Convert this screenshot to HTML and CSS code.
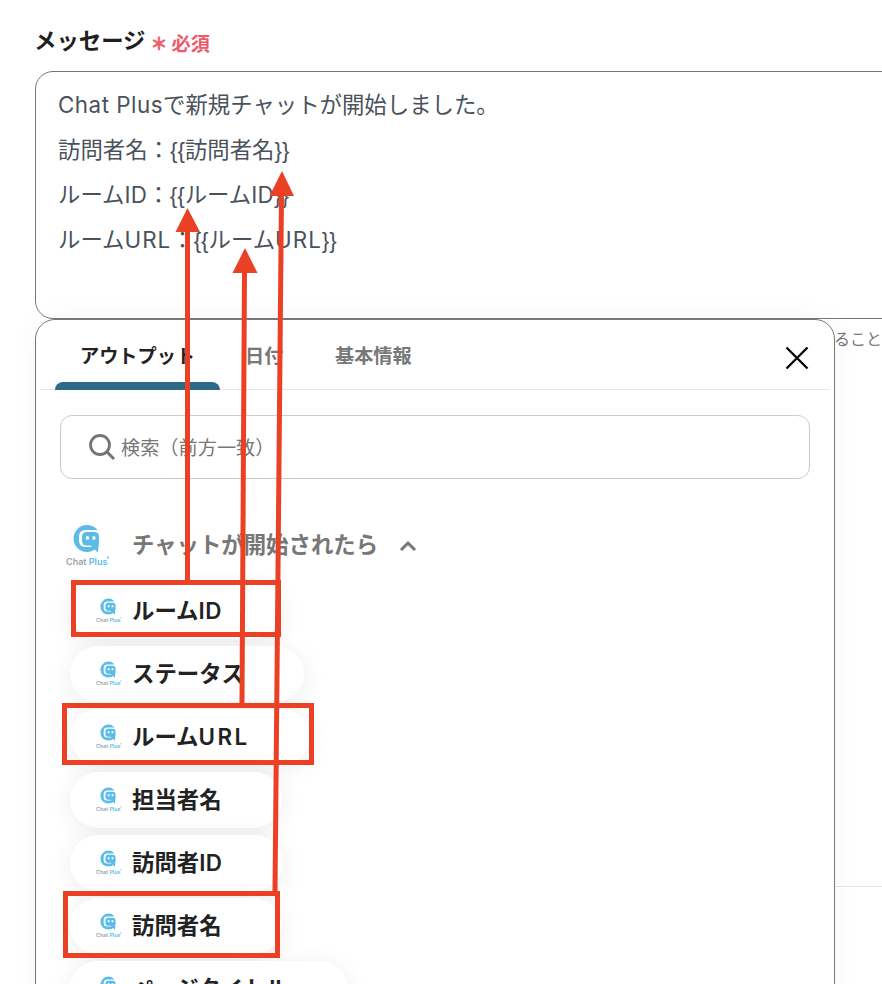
FILE: index.html
```html
<!DOCTYPE html>
<html lang="ja">
<head>
<meta charset="utf-8">
<title>メッセージ</title>
<link rel="stylesheet" href="styles.css">
</head>
<body>
<svg class="defs" width="0" height="0" aria-hidden="true">
  <symbol id="cp" viewBox="0 0 44 44">
    <circle cx="21" cy="14.500" r="13.500" fill="#5cbce6"/>
    <rect x="13" y="6" width="25" height="17" rx="6" fill="#fff"/>
    <rect x="16" y="8" width="17" height="13.500" rx="4.500" fill="#5cbce6"/>
    <path d="M24 21L33 17 32 28.500z" fill="#5cbce6"/>
    <rect x="19.800" y="12" width="3.200" height="3.800" rx="1.500" fill="#fff"/>
    <rect x="26.300" y="12" width="3.200" height="3.800" rx="1.500" fill="#fff"/>
    <text x="0" y="40.500" font-size="9" font-weight="600" font-family="Inter, sans-serif" fill="#9aa3a8">Chat <tspan fill="#5cbce6">Plus</tspan></text>
    <circle cx="42" cy="33.500" r="1" fill="#5cbce6"/>
  </symbol>
</svg>

<main class="page">
  <div class="label-row">
    <span class="label">メッセージ</span>
    <span class="star">＊</span>
    <span class="required">必須</span>
  </div>

  <div class="editor">
    <p><span class="sp-c">Chat Plus</span>で新規チャットが開始しました。</p>
    <p>訪問者名：<span class="br">{{</span>訪問者名<span class="br">}}</span></p>
    <p>ルーム<span class="sp-i">ID</span>：<span class="br">{{</span>ルーム<span class="sp-i">ID</span><span class="br">}}</span></p>
    <p>ルーム<span class="sp-u">URL</span>：<span class="br">{{</span>ルーム<span class="sp-u">URL</span><span class="br">}}</span></p>
  </div>

  <p class="behind">ること</p>
  <div class="behind-rule"></div>

  <section class="panel">
    <div class="tabs">
      <div class="tab tab-active">アウトプット</div>
      <div class="tab tab-date">日付</div>
      <div class="tab tab-basic">基本情報</div>
      <button class="close" aria-label="閉じる">
        <svg width="24" height="24" viewBox="0 0 24 24"><path d="M1.500 1.500l21 21M22.500 1.500l-21 21" stroke="#000" stroke-width="2.300" fill="none"/></svg>
      </button>
    </div>

    <div class="search">
      <svg width="28" height="28" viewBox="0 0 28 28"><circle cx="12" cy="12" r="9.500" fill="none" stroke="#757575" stroke-width="2.800"/><path d="M19 19l7 7" stroke="#757575" stroke-width="3" fill="none"/></svg>
      <span>検索（前方一致）</span>
    </div>

    <div class="group">
      <svg class="group-logo"><use href="#cp"/></svg>
      <span class="group-title">チャットが開始されたら</span>
      <svg class="chevron" width="18" height="12" viewBox="0 0 18 12"><path d="M2 10l7-7 7 7" fill="none" stroke="#777" stroke-width="3"/></svg>
    </div>

    <ul class="pills">
      <li class="pill"><svg class="pill-logo"><use href="#cp"/></svg><span>ルーム<span class="lat">ID</span></span></li>
      <li class="pill"><svg class="pill-logo"><use href="#cp"/></svg><span>ステータス</span></li>
      <li class="pill"><svg class="pill-logo"><use href="#cp"/></svg><span>ルーム<span class="lat-u">URL</span></span></li>
      <li class="pill"><svg class="pill-logo"><use href="#cp"/></svg><span>担当者名</span></li>
      <li class="pill"><svg class="pill-logo"><use href="#cp"/></svg><span>訪問者<span class="lat">ID</span></span></li>
      <li class="pill"><svg class="pill-logo"><use href="#cp"/></svg><span>訪問者名</span></li>
      <li class="pill"><svg class="pill-logo"><use href="#cp"/></svg><span>ページタイトル</span></li>
    </ul>
  </section>
</main>

<svg class="notes" width="882" height="984" viewBox="0 0 882 984" aria-hidden="true">
  <g fill="none" stroke="#ea4125" stroke-width="5">
    <rect x="73.500" y="582.500" width="205" height="52"/>
    <rect x="64.500" y="705.500" width="247" height="57"/>
    <rect x="65.500" y="893.500" width="212" height="62"/>
    <path d="M187.500 580V230"/>
    <path d="M242 704L244.500 270"/>
    <path d="M275 892L281.500 194"/>
  </g>
  <g fill="#ea4125">
    <path d="M187.500 208L200 232H175.500z"/>
    <path d="M245 248L257.500 273H232.500z"/>
    <path d="M282 171L294 196H269.500z"/>
  </g>
</svg>
</body>
</html>
```

FILE: styles.css
```css
* { box-sizing: border-box; }
html, body { margin: 0; padding: 0; }
body {
  width: 882px;
  height: 984px;
  overflow: hidden;
  background: #fff;
  font-family: Inter, "Noto Sans CJK JP", sans-serif;
  position: relative;
}
.defs { position: absolute; }
.page { padding: 26px 0 0 35px; width: 882px; height: 984px; overflow: hidden; position: relative; }

.label-row { display: flex; align-items: center; height: 30px; }
.label { font-size: 22.400px; font-weight: 700; color: #1f1f1f; line-height: 30px; margin-left: -1px; }
.star { color: #ef5a6b; font-size: 17px; font-weight: 700; line-height: 30px; margin: 5px 0 0 5px; -webkit-text-stroke: 0.6px #ef5a6b; }
.required { color: #ef5a6b; font-size: 19.200px; font-weight: 700; margin: 5px 0 0 4px; line-height: 30px; }

.editor {
  margin-top: 15px;
  width: 900px;
  height: 248px;
  border: 1px solid #777;
  border-radius: 18px;
  padding: 10px 22px;
  color: #4a525c;
  font-size: 22.400px;
}
.editor p { margin: 0; height: 45px; line-height: 45px; white-space: nowrap; }
.br { font-family: "Liberation Sans", sans-serif; }
.sp-c { letter-spacing: 0.500px; }
.sp-i { letter-spacing: 0.300px; }
.sp-u { letter-spacing: 1px; }

.behind { position: absolute; left: 834px; top: 328px; margin: 0; font-size: 16px; line-height: 22px; color: #777; white-space: nowrap; }
.behind-rule { position: absolute; left: 835px; right: 0; top: 886px; height: 1px; background: #e5e5e5; }

.panel {
  position: absolute;
  left: 35px;
  top: 319px;
  width: 800px;
  height: 700px;
  background: #fff;
  border: 1px solid #777;
  border-radius: 20px;
  box-shadow: 0 0 30px rgba(0,0,0,.04);
}

.tabs { position: relative; height: 70px; margin: 0 4px; border-bottom: 1px solid #e5e5e5; }
.tab { position: absolute; top: 22px; font-size: 19.200px; font-weight: 700; line-height: 28px; color: #777; white-space: nowrap; }
.tab-active { left: 40px; color: #222; }
.tab-active::after {
  content: "";
  position: absolute;
  left: -25px;
  top: 40px;
  width: 165px;
  height: 8px;
  background: #2c6a85;
  border-radius: 8px 8px 0 0;
}
.tab-date { left: 205px; }
.tab-basic { left: 295px; }
.close { position: absolute; right: 21px; top: 26px; width: 24px; height: 24px; padding: 0; border: 0; background: none; }
.close svg { display: block; }

.search {
  margin: 25px 24px 0;
  height: 64px;
  border: 1px solid #ccc;
  border-radius: 12px;
  display: flex;
  align-items: center;
  gap: 5px;
  padding-left: 27px;
  font-size: 19.200px;
  color: #777;
}

.group { display: flex; align-items: center; margin-top: 45px; padding-left: 30px; height: 44px; }
.group-logo { width: 44px; height: 44px; }
.group-title { font-size: 22.400px; font-weight: 700; color: #777; margin: 0 0 3px 22px; white-space: nowrap; line-height: 30px; }
.chevron { margin-left: 21px; margin-top: 0; }

.pills { list-style: none; margin: 15px 0 0 34px; padding: 0; display: flex; flex-direction: column; align-items: flex-start; gap: 7px; }
.pill {
  display: flex;
  align-items: center;
  height: 56px;
  padding: 0 60px 0 26px;
  gap: 10px;
  border-radius: 28px;
  background: #fff;
  box-shadow: 0 4px 24px rgba(0,0,0,.08);
  font-size: 22.400px;
  font-weight: 700;
  color: #222;
  white-space: nowrap;
}
.pill > span { line-height: 30px; }
.pill-logo { width: 26px; height: 26px; }
.lat { letter-spacing: 0.500px; font-weight: 600; }
.lat-u { letter-spacing: 2.500px; font-weight: 600; }

.notes { position: absolute; left: 0; top: 0; pointer-events: none; }
```
